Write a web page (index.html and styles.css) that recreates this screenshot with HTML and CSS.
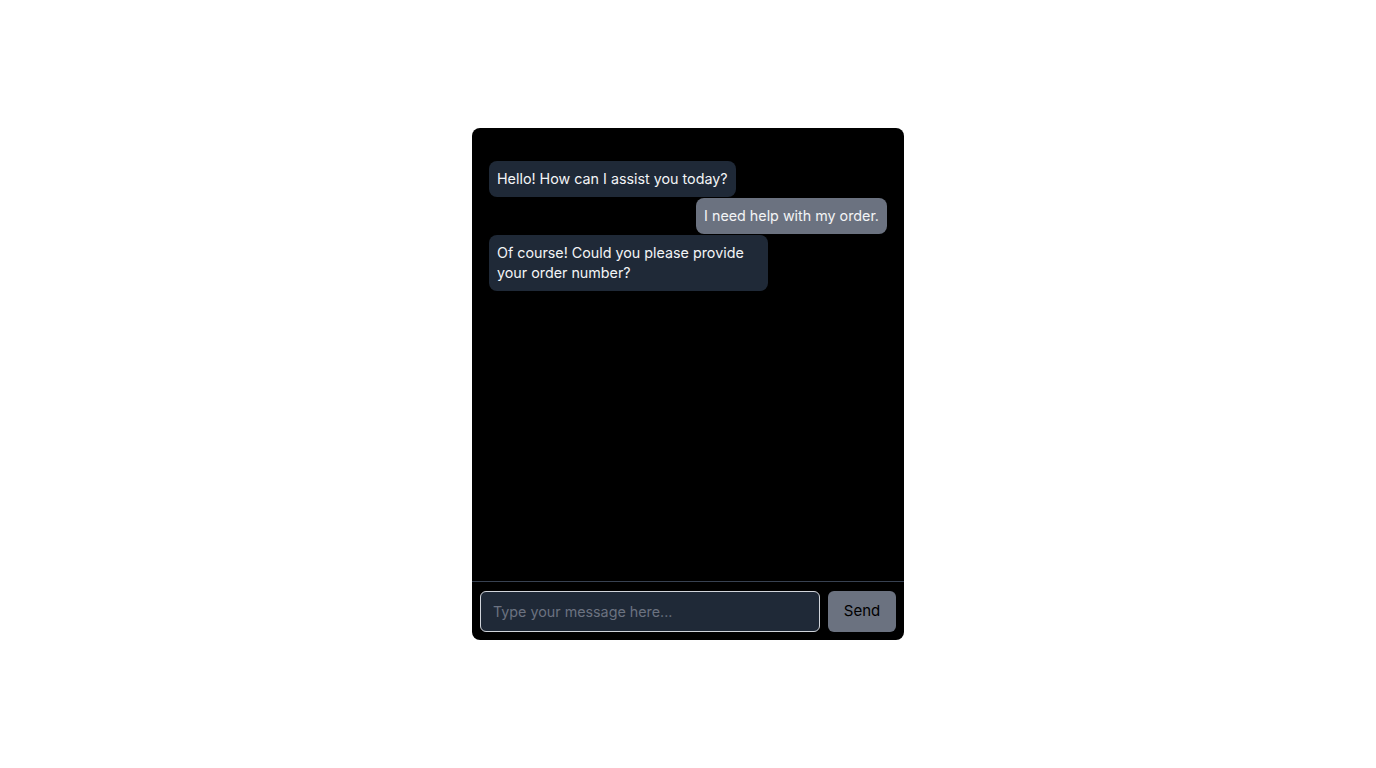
FILE: index.html
```html
<!DOCTYPE html>
<html lang="en">
<head>
  <meta charset="UTF-8">
  <title>Chat</title>
  <meta name="viewport" content="width=device-width, initial-scale=1.0">
  <link rel="stylesheet" href="styles.css">
</head>
<body>

  <div class="chat">
    <div class="messages">
      <div class="msg bot">Hello! How can I assist you today?</div>
      <div class="msg user">I need help with my order.</div>
      <div class="msg bot">Of course! Could you please provide your order number?</div>
    </div>

    <form class="composer">
      <input class="composer-input" type="text" placeholder="Type your message here...">
      <button class="composer-send" type="button">Send</button>
    </form>
  </div>

</body>
</html>
```

FILE: styles.css
```css
html, body {
  margin: 0;
  padding: 0;
  height: 100%;
  background: #fff;
  font-family: Inter, 'Noto Sans', sans-serif;
}

body {
  display: flex;
  justify-content: center;
  align-items: center;
}

.chat {
  width: 432px;
  height: 512px;
  background: #000;
  border-radius: 8px;
  display: flex;
  flex-direction: column;
  overflow: hidden;
}

.messages {
  flex: 1;
  padding: 33px 17px 16px;
  display: flex;
  flex-direction: column;
  align-items: flex-start;
  gap: 1px;
}

.msg {
  max-width: 70%;
  padding: 8px;
  border-radius: 8px;
  font-size: 14.3px;
  line-height: 20px;
  color: #f3f4f6;
  box-sizing: border-box;
}

.msg.bot {
  background: #1f2937;
}

.msg.user {
  background: #6b7280;
  align-self: flex-end;
}

.composer {
  margin: 0;
  border-top: 1px solid #374151;
  padding: 9px 8px 8px;
  display: flex;
  gap: 8px;
}

.composer-input {
  flex: 1;
  height: 41px;
  box-sizing: border-box;
  padding: 0 12px;
  background: #1f2937;
  border: 1px solid #d1d5db;
  border-radius: 6px;
  color: #fff;
  font-family: inherit;
  font-size: 14.3px;
  outline: none;
}

.composer-input::placeholder {
  color: #6b7280;
}

.composer-send {
  width: 68px;
  height: 41px;
  padding: 0 0 2px;
  border: none;
  border-radius: 6px;
  background: #6b7280;
  color: #000;
  font-family: inherit;
  font-size: 15px;
  cursor: pointer;
}
```
